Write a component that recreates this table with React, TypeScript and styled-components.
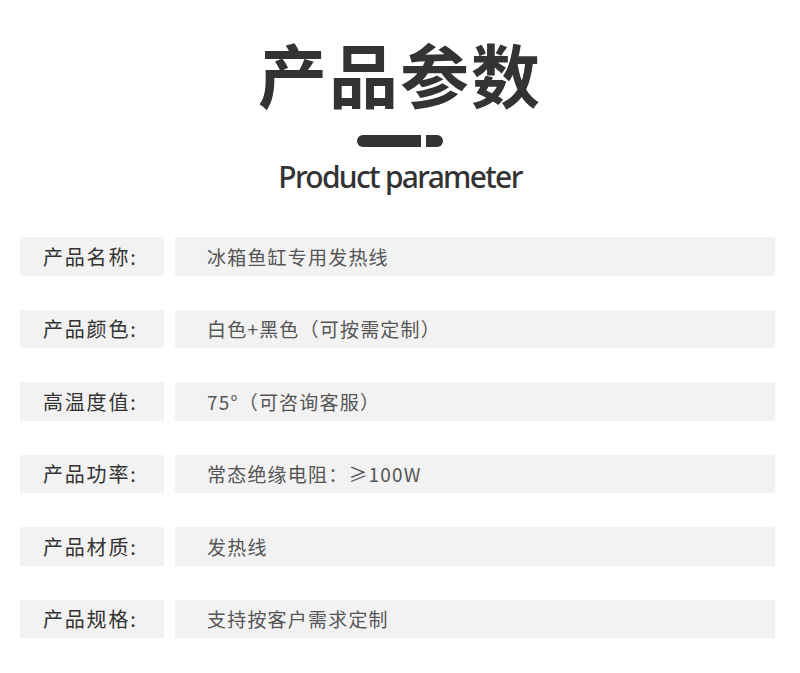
import styled, { createGlobalStyle } from 'styled-components';

const GlobalStyle = createGlobalStyle`
  html, body {
    margin: 0;
    padding: 0;
    background: #ffffff;
  }
  body {
    font-family: "Noto Sans CJK SC", "Noto Sans", sans-serif;
    color: #333;
  }
`;

const Page = styled.div`
  width: 800px;
  height: 673px;
  box-sizing: border-box;
  padding-top: 33px;
  overflow: hidden;
`;

const Header = styled.header`
  display: flex;
  flex-direction: column;
  align-items: center;
`;

const Title = styled.h1`
  margin: 0;
  font-size: 69px;
  line-height: 80px;
  font-weight: 700;
  color: #333;
  letter-spacing: 2px;
`;

const Divider = styled.div`
  display: flex;
  gap: 5px;
  margin-top: 22px;
`;

const Dash = styled.span<{ $w: number; $side: 'left' | 'right' }>`
  display: block;
  width: ${({ $w }) => $w}px;
  height: 12px;
  background: #333;
  border-radius: ${({ $side }) => ($side === 'left' ? '6px 0 0 6px' : '0 6px 6px 0')};
`;

const Subtitle = styled.h2`
  margin: 10px 0 0;
  font-family: "Noto Sans", "Open Sans", sans-serif;
  font-size: 30px;
  line-height: 40px;
  font-weight: 500;
  letter-spacing: -1.7px;
  color: #333;
`;

const Table = styled.div`
  display: flex;
  flex-direction: column;
  gap: 34px;
  padding: 0 25px 0 20px;
  margin-top: 40px;
`;

const Row = styled.div`
  display: grid;
  grid-template-columns: 144px 1fr;
  gap: 11px;
  height: 38.5px;
`;

const Label = styled.div`
  display: flex;
  align-items: center;
  padding-left: 23px;
  background: #f2f2f2;
  font-size: 20px;
  letter-spacing: 1.8px;
  color: #333;
`;

const Value = styled.div`
  display: flex;
  align-items: center;
  padding-left: 32px;
  background: #f2f2f2;
  font-size: 19px;
  letter-spacing: 1.2px;
  color: #555;
`;

const params: [string, string][] = [
  ['产品名称:', '冰箱鱼缸专用发热线'],
  ['产品颜色:', '白色+黑色（可按需定制）'],
  ['高温度值:', '75°（可咨询客服）'],
  ['产品功率:', '常态绝缘电阻：≥100W'],
  ['产品材质:', '发热线'],
  ['产品规格:', '支持按客户需求定制'],
];

const App = () => (
  <>
    <GlobalStyle />
    <Page>
      <Header>
        <Title>产品参数</Title>
        <Divider>
          <Dash $w={64} $side="left" />
          <Dash $w={17} $side="right" />
        </Divider>
        <Subtitle>Product parameter</Subtitle>
      </Header>
      <Table>
        {params.map(([label, value]) => (
          <Row key={label}>
            <Label>{label}</Label>
            <Value>{value}</Value>
          </Row>
        ))}
      </Table>
    </Page>
  </>
);

export default App;
